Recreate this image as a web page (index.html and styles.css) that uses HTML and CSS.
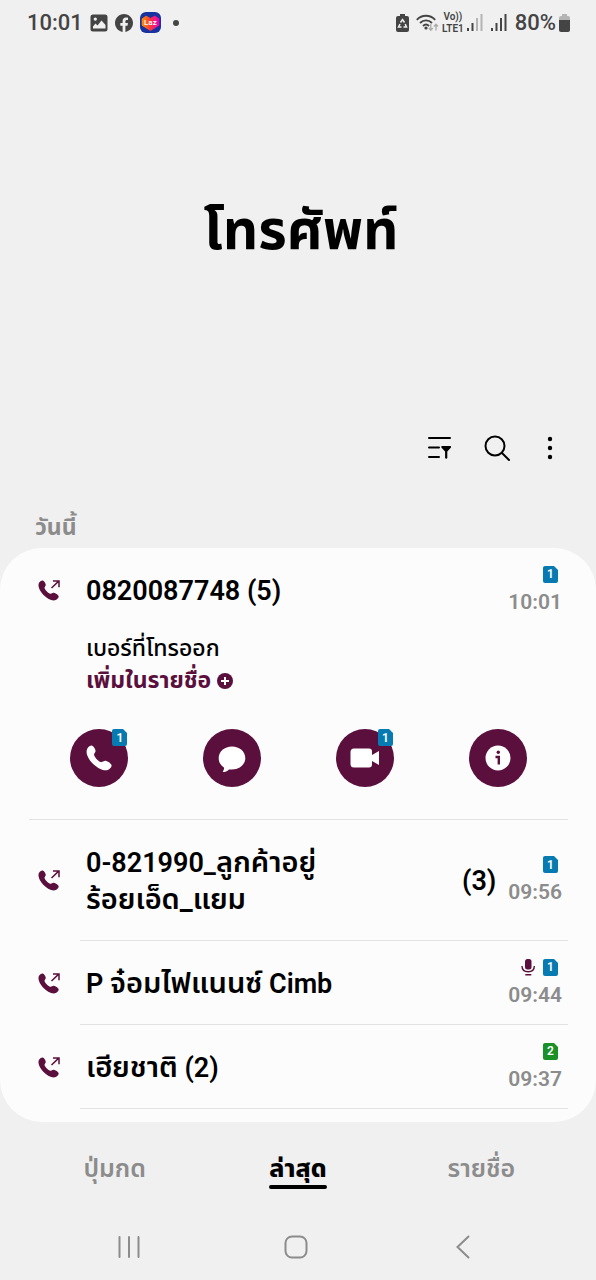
FILE: index.html
```html
<!DOCTYPE html>
<html lang="th">
<head>
<meta charset="utf-8">
<meta name="viewport" content="width=device-width, initial-scale=1">
<title>โทรศัพท์</title>
<link rel="stylesheet" href="styles.css">
</head>
<body>
<svg class="defs" width="0" height="0" aria-hidden="true">
  <symbol id="handset" viewBox="0 0 21 21"><path d="M1.200 2.600C2.300 1.200 3.600.3 4.700.5 6 .9 7.400 3 7.700 4.600 8 5.900 6.500 6.800 6.500 7.800c0 1.600 3.500 5.300 5.500 6 1.200.3 2.600-1.300 3.900-1 1.500.3 4.200 2 4.700 3.300.5 1.400-1.600 3.900-3.600 4.200-4 .6-8.500-2.200-12-5.800C1.800 11-.9 6 1.200 2.600Z"/></symbol>
  <symbol id="outgoing" viewBox="0 0 24 22"><path d="M1.200 2.600C2.300 1.200 3.600.3 4.700.5 6 .9 7.400 3 7.700 4.600 8 5.900 6.500 6.800 6.500 7.800c0 1.600 3.500 5.300 5.500 6 1.200.3 2.600-1.300 3.900-1 1.500.3 4.200 2 4.700 3.300.5 1.400-1.600 3.900-3.600 4.200-4 .6-8.500-2.200-12-5.800C1.800 11-.9 6 1.200 2.600Z"/><path d="M13.500 8 21 .9M15 .9h6v6.300" fill="none" stroke="currentColor" stroke-width="1.500"/></symbol>
  <symbol id="sim" viewBox="0 0 15 17"><path d="M2 0h9l4 4v11a2 2 0 0 1-2 2H2a2 2 0 0 1-2-2V2a2 2 0 0 1 2-2Z"/></symbol>
</svg>

<div class="phone">
  <div class="status">
    <div class="status-left">
      <span class="clock">10:01</span>
      <svg width="18" height="18" viewBox="0 0 18 18"><path fill-rule="evenodd" d="M3 .5h12A2.500 2.500 0 0 1 17.500 3v12a2.500 2.500 0 0 1-2.500 2.500H3A2.500 2.500 0 0 1 .5 15V3A2.500 2.500 0 0 1 3 .5ZM3 14.500h12.500V11l-4-4.500-4 5-2-2L3 12.500ZM5.300 3.500a1.600 1.600 0 1 0 .01 0Z"/></svg>
      <svg width="18" height="18" viewBox="0 0 24 24"><path d="M24 12.070C24 5.440 18.630.07 12 .07S0 5.440 0 12.070c0 5.990 4.390 10.960 10.130 11.860v-8.390H7.080v-3.470h3.050V9.430c0-3.010 1.790-4.670 4.530-4.670 1.310 0 2.690.23 2.690.23v2.950h-1.510c-1.490 0-1.960.93-1.960 1.880v2.250h3.330l-.53 3.470h-2.800v8.390C19.610 23.030 24 18.060 24 12.070Z"/></svg>
      <span class="shop">
        <svg width="21" height="21" viewBox="0 0 21 21"><defs><linearGradient id="heart"><stop offset="0" stop-color="#ff8a00"/><stop offset=".5" stop-color="#f6363f"/><stop offset="1" stop-color="#f400b5"/></linearGradient></defs><rect width="21" height="21" rx="6" fill="#18339f"/><path d="M2.500 7 6 4.500l4.500 2.500L15 4.500 18.500 7v6l-8 5-8-5Z" fill="url(#heart)" stroke="url(#heart)" stroke-width="1.500" stroke-linejoin="round"/></svg>
        <span class="shop-name">Laz</span>
      </span>
      <span class="dot"></span>
    </div>
    <div class="status-right">
      <svg class="saver" width="13" height="18" viewBox="0 0 13 18"><path d="M4 0h5v2h2a2 2 0 0 1 2 2v12a2 2 0 0 1-2 2H2a2 2 0 0 1-2-2V4a2 2 0 0 1 2-2h2Z"/><path d="m4.500 8.500 2-3 2 3M9.200 10l1.300 3H7.500M5.500 13h-3L4 10" fill="none" stroke="#f0f0f0" stroke-width="1.500"/></svg>
      <svg width="23" height="18" viewBox="0 0 23 18"><g fill="none" stroke="currentColor" stroke-width="1.900"><path d="M.8 5.800C6 .4 14 .4 19.200 5.800M4 9c3.500-3.500 8.500-3.500 12 0M7 12c1.800-1.700 4.200-1.700 6 0"/></g><circle cx="10" cy="14" r="1.600"/><path d="M14.800 10v6m-2-2 2 2.200 2-2.200M20 16.500v-6m-2 2 2-2.200 2 2.200" fill="none" stroke="#aaa" stroke-width="1.300"/></svg>
      <span class="lte"><span>Vo))</span><span>LTE1</span></span>
      <svg width="16" height="17" viewBox="0 0 16 17"><path d="M0 14h2v3H0Zm4.500-5h2v8h-2Z"/><path fill="#b4b4b4" d="M9 4h2v13H9Zm4.500-4h2v17h-2Z"/></svg>
      <svg class="sig2" width="16" height="17" viewBox="0 0 16 17"><path d="M0 14h2v3H0Zm4.500-5h2v8h-2ZM9 4h2v13H9Zm4.500-4h2v17h-2Z"/></svg>
      <span class="pct">80%</span>
      <svg width="11" height="18" viewBox="0 0 11 18"><path fill="#b4b4b4" d="M3 0h5v2h1a2 2 0 0 1 2 2v3H0V4a2 2 0 0 1 2-2h1Z"/><path d="M0 6h11v10a2 2 0 0 1-2 2H2a2 2 0 0 1-2-2Z"/></svg>
    </div>
  </div>

  <header class="hero"><h1>โทรศัพท์</h1></header>

  <div class="toolbar">
    <button type="button" aria-label="ตัวกรอง"><svg width="24" height="24" viewBox="0 0 24 24"><path d="M1 2h21M1 11.500h10M1 21h10" fill="none" stroke="#000" stroke-width="2" stroke-linecap="round"/><path fill="#000" d="M13.500 10h9.300l.2 1.500-3.700 4V22a1.200 1.200 0 0 1-2.200 0v-6.500l-3.800-4Z"/></svg></button>
    <button type="button" aria-label="ค้นหา"><svg width="28" height="28" viewBox="0 0 28 28"><g fill="none" stroke="#000" stroke-width="2" stroke-linecap="round"><circle cx="12" cy="12" r="9.500"/><path d="m19 19 7 7"/></g></svg></button>
    <button type="button" class="more" aria-label="เพิ่มเติม"><svg width="6" height="24" viewBox="0 0 6 24"><g fill="#000"><circle cx="3" cy="3" r="2.200"/><circle cx="3" cy="12" r="2.200"/><circle cx="3" cy="21" r="2.200"/></g></svg></button>
  </div>

  <h2 class="day">วันนี้</h2>

  <main class="card">
    <section class="open">
      <div class="call call-top">
        <svg class="dir" width="24" height="22"><use href="#outgoing"/></svg>
        <span class="name">0820087748 (5)</span>
        <span class="meta"><span class="marks"><span class="sim"><svg width="15" height="17"><use href="#sim"/></svg><b>1</b></span></span><time>10:01</time></span>
      </div>
      <div class="detail">
        <p>เบอร์ที่โทรออก</p>
        <a href="#add">เพิ่มในรายชื่อ<svg width="16" height="16" viewBox="0 0 16 16"><circle cx="8" cy="8" r="8"/><path d="M8 4v8M4 8h8" stroke="#fff" stroke-width="2"/></svg></a>
      </div>
      <div class="actions">
        <button type="button" aria-label="โทร"><svg width="26" height="26"><use href="#handset"/></svg><span class="sim pin"><svg width="15" height="17"><use href="#sim"/></svg><b>1</b></span></button>
        <button type="button" aria-label="ข้อความ"><svg width="28" height="28" viewBox="0 0 28 28"><path d="M14 2.500c7.500 0 13.300 5 13.300 11.500S21.500 25.500 14 25.500H11c-1.700 1.800-3.500 2.600-5.700 2.500-.6-.1-.5-.5-.2-.9.9-1.200 1.100-2.200.8-3.700C2.500 21.400.7 18 .7 14 .7 7.500 6.500 2.500 14 2.500Z"/></svg></button>
        <button type="button" aria-label="วิดีโอคอล"><svg width="30" height="20" viewBox="0 0 30 20"><path d="M4 .5h15a3 3 0 0 1 3 3V7l7-4v14l-7-4v3.500a3 3 0 0 1-3 3H4a3.500 3.500 0 0 1-3.500-3.500V4A3.500 3.500 0 0 1 4 .5Z"/></svg><span class="sim pin"><svg width="15" height="17"><use href="#sim"/></svg><b>1</b></span></button>
        <button type="button" aria-label="รายละเอียด"><svg width="26" height="26" viewBox="0 0 26 26"><circle cx="13" cy="13" r="12.500"/><circle cx="13.300" cy="7.300" r="1.700" fill="#5b0f3d"/><path d="M10.500 12h3.300v7.500" fill="none" stroke="#5b0f3d" stroke-width="2.400"/></svg></button>
      </div>
    </section>

    <div class="call tall">
      <svg class="dir" width="24" height="22"><use href="#outgoing"/></svg>
      <span class="name">0-821990_<span class="thai">ลูกค้าอยู่<br>ร้อยเอ็ด_แยม</span></span>
      <span class="count">(3)</span>
      <span class="meta"><span class="marks"><span class="sim"><svg width="15" height="17"><use href="#sim"/></svg><b>1</b></span></span><time>09:56</time></span>
    </div>
    <div class="call">
      <svg class="dir" width="24" height="22"><use href="#outgoing"/></svg>
      <span class="name">P <span class="thai">จ๋อมไฟแนนซ์</span> Cimb</span>
      <span class="meta"><span class="marks"><svg class="mic" width="14" height="17" viewBox="0 0 14 17"><rect x="4" y="0" width="6.500" height="10.500" rx="2.500"/><path d="M1 7c0 3.500 2 5.800 6.200 5.800S13.300 10.500 13.300 7M4.300 15.800h6" fill="none" stroke="currentColor" stroke-width="1.400"/></svg><span class="sim"><svg width="15" height="17"><use href="#sim"/></svg><b>1</b></span></span><time>09:44</time></span>
    </div>
    <div class="call">
      <svg class="dir" width="24" height="22"><use href="#outgoing"/></svg>
      <span class="name"><span class="thai">เฮียชาติ</span> (2)</span>
      <span class="meta"><span class="marks"><span class="sim green"><svg width="15" height="17"><use href="#sim"/></svg><b>2</b></span></span><time>09:37</time></span>
    </div>
  </main>

  <nav class="tabs">
    <a href="#keypad">ปุ่มกด</a>
    <a href="#recents" class="current" aria-current="page">ล่าสุด</a>
    <a href="#contacts">รายชื่อ</a>
  </nav>

  <div class="system">
    <button type="button" aria-label="แอพล่าสุด"><svg width="24" height="24" viewBox="0 0 24 24"><path d="M2.500 2v20M12 2v20M21.500 2v20"/></svg></button>
    <button type="button" aria-label="หน้าหลัก"><svg width="24" height="24" viewBox="0 0 24 24"><rect x="1.500" y="1.500" width="21" height="21" rx="6.500"/></svg></button>
    <button type="button" aria-label="กลับ"><svg width="24" height="24" viewBox="0 0 24 24"><path d="M17.500 1.500 6.500 12l11 10.500"/></svg></button>
  </div>
</div>
</body>
</html>
```
FILE: styles.css
```css
* { box-sizing: border-box; }
body {
  margin: 0;
  background: #f0f0f0;
  color: #000;
  font-family: Roboto, "Noto Sans Thai", "Noto Sans", sans-serif;
}
h1, h2, p { margin: 0; }
svg { display: block; flex: none; fill: currentColor; }
.defs { position: absolute; }
button {
  border: 0;
  padding: 0;
  background: none;
  color: inherit;
  font: inherit;
}
a { color: inherit; text-decoration: none; }

.phone { display: flex; flex-direction: column; min-height: 100vh; }

.status {
  display: flex;
  justify-content: space-between;
  height: 45px;
  padding: 0 26px 0 27px;
  color: #444;
}
.status-left, .status-right { display: flex; align-items: center; }
.status-left { gap: 7px; }
.status-right { gap: 3px; }
.clock, .pct { font-size: 22px; font-weight: 500; line-height: 24px; }
.shop { display: grid; place-items: center; }
.shop > * { grid-area: 1 / 1; }
.shop-name { color: #fff; font-size: 8px; font-weight: 500; line-height: 8px; }
.dot { width: 6px; height: 6px; margin-left: 5px; border-radius: 50%; background: #444; }
.saver { margin-right: 4px; }
.lte {
  display: flex;
  flex-direction: column;
  align-items: center;
  font-size: 10px;
  font-weight: 600;
  line-height: 12px;
}
.sig2 { margin: 0 5px; }

.hero { display: flex; justify-content: center; padding: 145px 0 0 6px; }
.hero h1 { font-size: 55px; font-weight: 700; line-height: 80px; }

.toolbar {
  display: flex;
  align-items: center;
  justify-content: flex-end;
  gap: 31px;
  margin-top: 154px;
  padding-right: 43px;
  height: 48px;
}
.more { margin-left: 5px; }
.day {
  margin-top: 36px;
  padding: 0 35px;
  color: #8c8c8c;
  font-size: 23px;
  font-weight: 700;
  line-height: 40px;
}

.card { background: #fcfcfc; border-radius: 42px; padding-bottom: 13px; }
.call {
  display: flex;
  align-items: center;
  gap: 12px;
  min-height: 84px;
  margin: 0 28px 0 80px;
  padding: 2px 6px 0 0;
  border-bottom: 1px solid #e2e2e2;
}
.tall { min-height: 121px; }
.call-top { min-height: 85px; border: 0; margin: 0; padding: 0 6px 0 51px; }
.open { margin: 0 28px 0 29px; border-bottom: 1px solid #e2e2e2; }
.dir { color: #5b0f3d; margin: 0 8px 0 -42px; }
.name, .count { font-size: 27px; font-weight: 600; line-height: 36px; }
.name { flex: 1; margin-left: 4px; }
.thai { font-size: 29px; line-height: 36px; }
.meta { display: flex; flex-direction: column; align-items: flex-end; gap: 5px; }
.marks { display: flex; gap: 8px; padding-right: 4px; color: #5b0f3d; }
time { color: #8c8c8c; font-size: 21px; font-weight: 600; line-height: 28px; }
.sim { display: grid; place-items: center; color: #077bb1; }
.sim > * { grid-area: 1 / 1; }
.sim b { color: #fff; font-size: 12px; font-weight: 600; line-height: 16px; }
.green { color: #1a9127; }

.detail { padding: 0 57px; font-size: 23px; line-height: 32px; font-weight: 500; }
.detail a { display: flex; align-items: center; gap: 6px; color: #5b0f3d; font-weight: 700; }
.actions {
  display: grid;
  grid-template-columns: repeat(4, 1fr);
  justify-items: center;
  padding: 32px 4px;
}
.actions button {
  position: relative;
  display: grid;
  place-items: center;
  width: 58px;
  height: 58px;
  border-radius: 50%;
  background: #5b0f3d;
  color: #fff;
}
.actions .pin { position: absolute; top: 0; right: 1px; }

.tabs { display: grid; grid-template-columns: repeat(3, 1fr); justify-items: center; padding: 31px 23px 0; }
.tabs a {
  display: flex;
  flex-direction: column;
  color: #8c8c8c;
  font-size: 25px;
  font-weight: 600;
  line-height: 32px;
}
.tabs a::after { content: ""; height: 4px; border-radius: 2px; }
.tabs .current { color: #000; font-weight: 800; }
.tabs .current::after { background: #000; }
.system {
  display: grid;
  grid-template-columns: repeat(3, 1fr);
  justify-items: center;
  padding: 46px 49px 20px 45px;
  color: #8c8c8c;
}
.system svg { fill: none; stroke: currentColor; stroke-width: 2; stroke-linecap: round; }
```
